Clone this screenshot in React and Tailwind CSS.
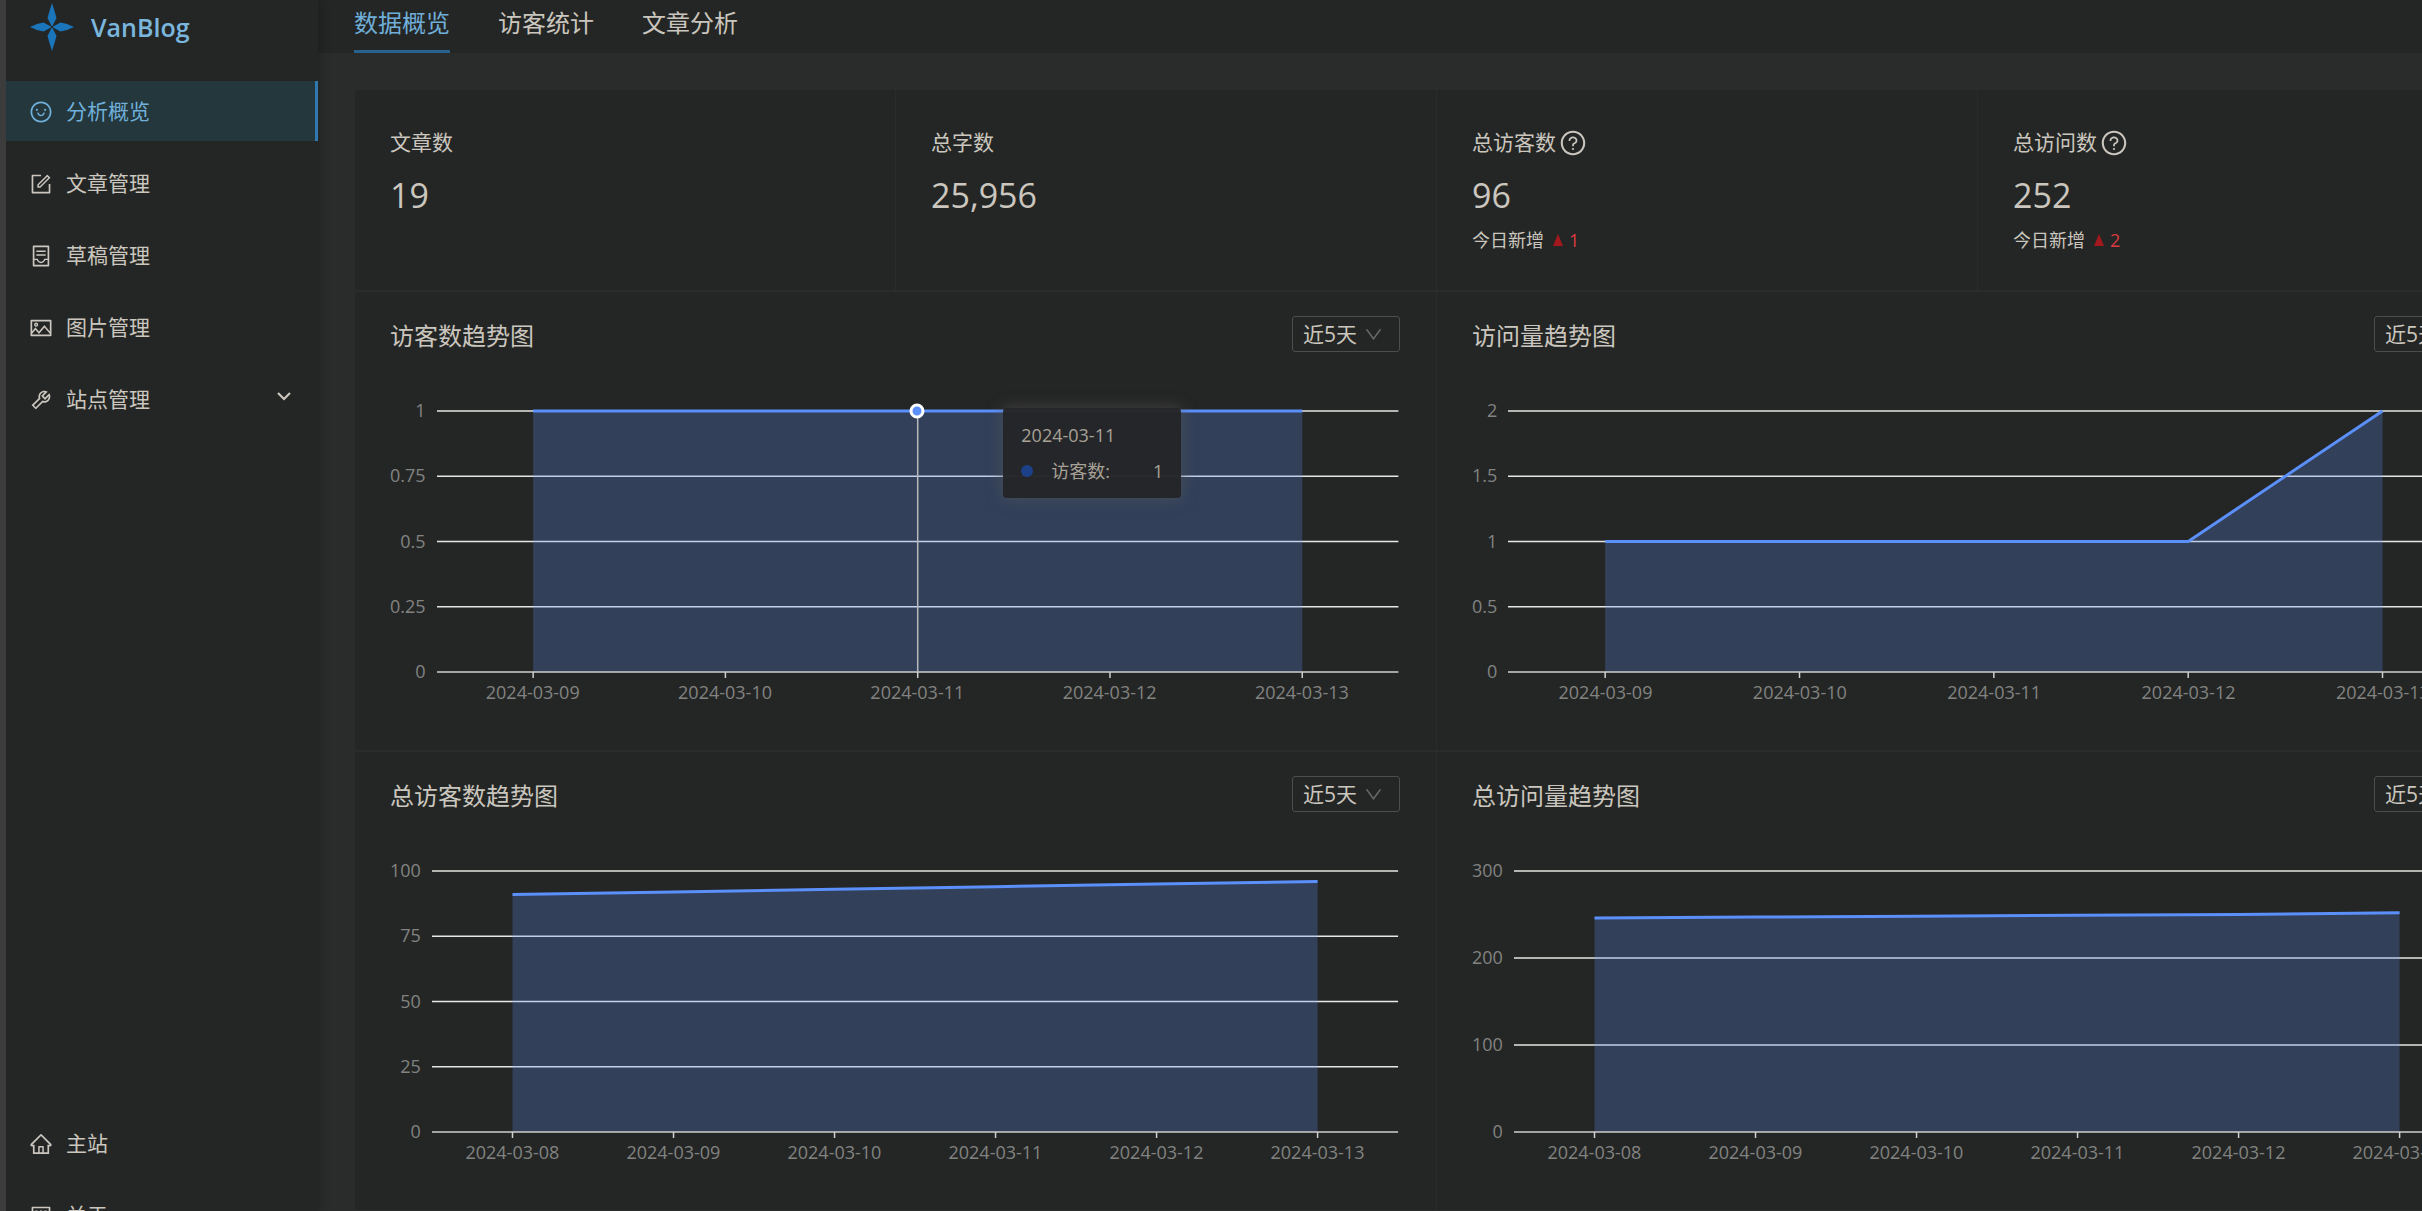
import React from "react";
import {
  AiOutlineSmile,
  AiOutlineForm,
  AiOutlineContainer,
  AiOutlinePicture,
  AiOutlineTool,
  AiOutlineHome,
  AiOutlineProject,
  AiOutlineQuestionCircle,
  AiOutlineDown,
} from "react-icons/ai";

const menu = [
  { label: "分析概览", icon: AiOutlineSmile, active: true },
  { label: "文章管理", icon: AiOutlineForm },
  { label: "草稿管理", icon: AiOutlineContainer },
  { label: "图片管理", icon: AiOutlinePicture },
  { label: "站点管理", icon: AiOutlineTool, expandable: true },
];

const footerMenu = [
  { label: "主站", icon: AiOutlineHome },
  { label: "关于", icon: AiOutlineProject },
];

const tabs = ["数据概览", "访客统计", "文章分析"];

const stats = [
  { label: "文章数", value: "19" },
  { label: "总字数", value: "25,956" },
  { label: "总访客数", value: "96", added: 1 },
  { label: "总访问数", value: "252", added: 2 },
];

const fiveDays = ["2024-03-09", "2024-03-10", "2024-03-11", "2024-03-12", "2024-03-13"];
const sixDays = ["2024-03-08", ...fiveDays];

const charts = [
  {
    title: "访客数趋势图",
    ticks: ["1", "0.75", "0.5", "0.25", "0"],
    max: 1,
    dates: fiveDays,
    values: [1, 1, 1, 1, 1],
    hover: { date: "2024-03-11", name: "访客数", value: 1 },
  },
  {
    title: "访问量趋势图",
    ticks: ["2", "1.5", "1", "0.5", "0"],
    max: 2,
    dates: fiveDays,
    values: [1, 1, 1, 1, 2],
  },
  {
    title: "总访客数趋势图",
    ticks: ["100", "75", "50", "25", "0"],
    max: 100,
    dates: sixDays,
    values: [91, 92, 93, 94, 95, 96],
  },
  {
    title: "总访问量趋势图",
    ticks: ["300", "200", "100", "0"],
    max: 300,
    dates: sixDays,
    values: [246, 247, 248, 249, 250, 252],
  },
];

function Logo() {
  return (
    <svg viewBox="0 0 44 48" className="h-12 w-11" fill="#1b75bb" aria-hidden="true">
      <path d="M22 0 24.500 8 26.500 15 22.500 23H21.500L17.500 15 19.500 8Z" />
      <path d="M22 48 24.500 40 26.500 33 22.500 25H21.500L17.500 33 19.500 40Z" />
      <path d="M0 24 7 21 13.500 19.500 21 23.500V24.500L13.500 28.500 7 27Z" />
      <path d="M44 24 37 21 30.500 19.500 23 23.500V24.500L30.500 28.500 37 27Z" />
    </svg>
  );
}

function MenuItem({ item }) {
  const Icon = item.icon;
  return (
    <li>
      <a
        href="#"
        className={
          item.active
            ? "flex h-15 items-center gap-[13px] border-r-3 border-[#2f78b0] bg-[#23373c] pl-[23px] pr-6 pt-[2px] text-[#70afd9]"
            : "flex h-15 items-center gap-[13px] pl-[23px] pr-[27px] pt-[2px] text-[#cbc6be]"
        }
      >
        <Icon className="size-6" />
        <span className="flex-1">{item.label}</span>
        {item.expandable && (
          <svg viewBox="0 0 14 10" className="mb-2 h-[10px] w-[14px]" fill="none" stroke="currentColor" strokeWidth="2.200">
            <path d="M1 2 7 8 13 2" />
          </svg>
        )}
      </a>
    </li>
  );
}

function Sidebar() {
  return (
    <aside className="z-10 flex w-[318px] shrink-0 flex-col border-l-6 border-[#3d3c3d] bg-[#242626] shadow-[3px_0_9px_rgba(0,0,0,0.2)]">
      <a href="#" className="flex h-[81px] items-start gap-[17px] pl-6 pt-[3px]">
        <Logo />
        <span className="pt-1 text-[25px] leading-10 font-semibold text-[#7ab6dd]">VanBlog</span>
      </a>
      <nav className="flex flex-1 flex-col justify-between">
        <ul className="flex flex-col gap-3">
          {menu.map((item) => (
            <MenuItem key={item.label} item={item} />
          ))}
        </ul>
        <ul className="-mb-[34px] flex flex-col gap-3">
          {footerMenu.map((item) => (
            <MenuItem key={item.label} item={item} />
          ))}
        </ul>
      </nav>
    </aside>
  );
}

function StatCard({ stat }) {
  return (
    <section className="h-[200px] rounded-xs bg-[#242626] pl-[35px] pr-9 pt-[37px]">
      <h3 className="flex h-8 items-center gap-[3px] text-[21px]">
        {stat.label}
        {stat.added && (
          <button type="button" aria-label={stat.label + "说明"}>
            <AiOutlineQuestionCircle className="size-7" />
          </button>
        )}
      </h3>
      <p className="mt-3 text-[34px] leading-12">{stat.value}</p>
      {stat.added && (
        <p className="mt-[7px] flex items-center text-[18px] leading-7">
          今日新增
          <svg viewBox="0 0 10 12" className="ml-[9px] h-3 w-[10px]" fill="#a3181c" aria-hidden="true">
            <path d="M5 0 10 12H0Z" />
          </svg>
          <span className="ml-[6px] text-[#dc3b40]">{stat.added}</span>
        </p>
      )}
    </section>
  );
}

const PLOT_HEIGHT = 261;

function Plot({ chart }) {
  const count = chart.values.length;
  const points = chart.values.map((value, i) => [
    ((i + 0.5) / count) * 1000,
    PLOT_HEIGHT * (1 - value / chart.max),
  ]);
  const line = points.map((p) => p.join(" ")).join(" L ");
  const first = points[0][0];
  const last = points[count - 1][0];
  const steps = chart.ticks.length - 1;
  return (
    <svg
      viewBox="0 0 1000 261"
      preserveAspectRatio="none"
      className="block h-[261px] w-full overflow-visible"
      fill="none"
      aria-hidden="true"
    >
      {chart.ticks.slice(0, -1).map((tick, i) => (
        <path
          key={tick}
          d={`M0 ${(PLOT_HEIGHT * i) / steps} H1000`}
          stroke="#e6e6e2"
          strokeWidth="1.5"
          vectorEffect="non-scaling-stroke"
        />
      ))}
      <path d={`M${first} ${PLOT_HEIGHT} L ${line} L ${last} ${PLOT_HEIGHT} Z`} fill="#5b8ff9" fillOpacity="0.25" />
      <path d={`M0 ${PLOT_HEIGHT} H1000`} stroke="#cfcfcd" strokeWidth="1.5" vectorEffect="non-scaling-stroke" />
      {points.map(([x]) => (
        <path key={x} d={`M${x} 261 V267`} stroke="#cfcfcd" strokeWidth="1.5" vectorEffect="non-scaling-stroke" />
      ))}
      {chart.hover && (
        <path d="M500 0 V261" stroke="#b9b9b9" strokeWidth="1.5" vectorEffect="non-scaling-stroke" />
      )}
      <path d={`M ${line}`} stroke="#5b8ff9" strokeWidth="3" vectorEffect="non-scaling-stroke" />
    </svg>
  );
}

function Tooltip({ hover }) {
  return (
    <>
      <span className="absolute left-1/2 top-0 size-[15px] -translate-x-1/2 -translate-y-1/2 rounded-full border-3 border-white bg-[#5b8ff9]" />
      <div
        role="tooltip"
        className="absolute -top-[3px] left-1/2 ml-[86px] h-[90px] w-[178px] rounded-[4px] bg-[#242527]/97 px-[18px] pt-[13px] text-[18px] text-[#a8a196] shadow-[0_0_15px_rgba(90,90,84,0.6)]"
      >
        <p className="leading-7">{hover.date}</p>
        <p className="mt-2 flex items-center leading-7">
          <span className="size-3 rounded-full bg-[#1c4189]" />
          <span className="ml-[18px] flex-1">{hover.name}:</span>
          <span>{hover.value}</span>
        </p>
      </div>
    </>
  );
}

function ChartCard({ chart }) {
  return (
    <section className="h-[458px] rounded-xs bg-[#242626] pl-[35px] pr-9 pt-6">
      <header className="flex h-9 items-center justify-between">
        <h2 className="pt-1 text-[24px]">{chart.title}</h2>
        <div className="relative">
          <select
            aria-label={chart.title}
            className="h-9 w-[108px] appearance-none rounded-[3px] border border-[#4b4d4d] bg-transparent pl-[10px] text-[21px] leading-7"
          >
            <option>近5天</option>
          </select>
          <AiOutlineDown className="pointer-events-none absolute right-4 top-2 size-[21px] text-[#666766]" />
        </div>
      </header>
      <div className="mr-[2px] mt-[59px] flex gap-[11px] text-[18px] text-[#828380]">
        <ul className="-mb-[11px] -mt-[13px] flex h-[285px] flex-col justify-between text-right leading-6">
          {chart.ticks.map((tick) => (
            <li key={tick}>{tick}</li>
          ))}
        </ul>
        <div className="relative flex-1">
          <Plot chart={chart} />
          <ol className="mt-2 flex text-center leading-6">
            {chart.dates.map((date) => (
              <li key={date} className="flex-1">
                {date}
              </li>
            ))}
          </ol>
          {chart.hover && <Tooltip hover={chart.hover} />}
        </div>
      </div>
    </section>
  );
}

export default function App() {
  return (
    <div className="flex h-screen overflow-hidden bg-[#2a2b2b] font-['Open_Sans','Noto_Sans_CJK_SC',sans-serif] text-[21px] text-[#cbc6be]">
      <Sidebar />
      <div className="min-w-0 flex-1">
        <nav className="flex h-[53px] gap-12 bg-[#242626] pl-9 text-[24px]">
          {tabs.map((tab, i) => (
            <a
              key={tab}
              href="#"
              className={
                i === 0
                  ? "border-b-3 border-[#28638f] pt-[3px] leading-10 text-[#70afd9]"
                  : "border-b-3 border-transparent pt-[3px] leading-10"
              }
            >
              {tab}
            </a>
          ))}
        </nav>
        <main className="-mr-24 flex flex-col gap-[2px] pl-[37px] pt-[37px]">
          <div className="grid grid-cols-4 gap-px">
            {stats.map((stat) => (
              <StatCard key={stat.label} stat={stat} />
            ))}
          </div>
          <div className="grid grid-cols-2 gap-x-px gap-y-[2px]">
            {charts.map((chart) => (
              <ChartCard key={chart.title} chart={chart} />
            ))}
          </div>
        </main>
      </div>
    </div>
  );
}
